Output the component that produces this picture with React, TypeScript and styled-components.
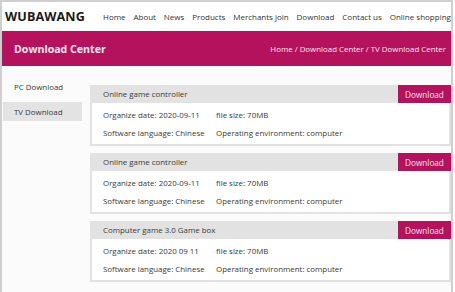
import styled, { createGlobalStyle } from "styled-components";

const GlobalStyle = createGlobalStyle`
    * {
        box-sizing: border-box;
    }
    body {
        margin: 0;
        background: #ffffff;
        font-family: "Open Sans", "Noto Sans", sans-serif;
    }
`;

const Page = styled.div`
    width: 453px;
    height: 292px;
    border: 2px solid #cfcfcf;
    border-bottom: none;
    background-color: #fbfbfb;
    overflow: hidden;
`;

const Header = styled.header`
    height: 29px;
    display: flex;
    align-items: center;
    background-color: #ffffff;
    padding: 0 0 0 3px;
`;

const Logo = styled.h1`
    margin: 0;
    font-size: 12.6px;
    font-weight: 700;
    color: #1a1a1a;
    letter-spacing: 0.1px;
    width: 98px;
`;

const NavList = styled.ul`
    flex: 1;
    margin: 0;
    padding: 0;
    list-style: none;
    display: flex;
    justify-content: space-between;
`;

const NavItem = styled.li`
    font-size: 8px;
    color: #333;
    white-space: nowrap;
    cursor: pointer;
`;

const Banner = styled.section`
    height: 35px;
    background-color: #b5125d;
    display: flex;
    align-items: center;
    justify-content: space-between;
    padding: 0 5px 0 12px;
    color: #fbe6ef;
`;

const BannerTitle = styled.h2`
    margin: 0;
    font-size: 10.6px;
    font-weight: 700;
`;

const Crumbs = styled.div`
    font-size: 7.9px;
`;

const Main = styled.div`
    display: flex;
`;

const Sidebar = styled.aside`
    width: 88px;
    padding: 11px 0 0 1px;
    display: flex;
    flex-direction: column;
`;

const SideItem = styled.div<{ $active?: boolean }>`
    width: 79px;
    height: 19px;
    display: flex;
    align-items: center;
    padding-left: 11px;
    font-size: 7.9px;
    color: #3a3a3a;
    background-color: ${props => (props.$active ? "#e3e3e3" : "transparent")};
    margin-bottom: 6px;
`;

const Content = styled.div`
    flex: 1;
    padding-top: 19px;
    display: flex;
    flex-direction: column;
    gap: 7px;
`;

const Card = styled.div`
    border: 2px solid #e2e2e2;
    border-top: none;
    background-color: #ffffff;
`;

const CardHead = styled.div`
    height: 18px;
    display: flex;
    align-items: center;
    justify-content: space-between;
    background-color: #e2e2e2;
    margin: 0 -2px;
`;

const CardTitle = styled.span`
    font-size: 7.9px;
    color: #3a3a3a;
    padding-left: 13px;
`;

const DownloadBtn = styled.button`
    height: 18px;
    width: 53px;
    border: none;
    background-color: #b5125d;
    color: #fbe6ef;
    font-family: inherit;
    font-size: 8.2px;
    padding: 0;
    cursor: pointer;
`;

const CardBody = styled.div`
    padding: 3px 0 2px 11px;
    display: flex;
    flex-direction: column;
`;

const InfoRow = styled.div`
    height: 18px;
    display: flex;
    align-items: center;
    font-size: 7.9px;
    color: #3a3a3a;
`;

const InfoCell = styled.span<{ $width?: number }>`
    width: ${props => (props.$width ? `${props.$width}px` : "auto")};
    white-space: nowrap;
`;

const items = [
    { title: "Online game controller", date: "2020-09-11" },
    { title: "Online game controller", date: "2020-09-11" },
    { title: "Computer game 3.0  Game box", date: "2020 09 11" },
];

const nav = ["Home", "About", "News", "Products", "Merchants join", "Download", "Contact us", "Online shopping"];

function App() {
    return (
        <>
            <GlobalStyle />
            <Page>
                <Header>
                    <Logo>WUBAWANG</Logo>
                    <NavList>
                        {nav.map(n => (
                            <NavItem key={n}>{n}</NavItem>
                        ))}
                    </NavList>
                </Header>
                <Banner>
                    <BannerTitle>Download Center</BannerTitle>
                    <Crumbs>Home / Download Center / TV Download Center</Crumbs>
                </Banner>
                <Main>
                    <Sidebar>
                        <SideItem>PC Download</SideItem>
                        <SideItem $active>TV Download</SideItem>
                    </Sidebar>
                    <Content>
                        {items.map((it, i) => (
                            <Card key={i}>
                                <CardHead>
                                    <CardTitle>{it.title}</CardTitle>
                                    <DownloadBtn>Download</DownloadBtn>
                                </CardHead>
                                <CardBody>
                                    <InfoRow>
                                        <InfoCell $width={113}>Organize date: {it.date}</InfoCell>
                                        <InfoCell>file size: 70MB</InfoCell>
                                    </InfoRow>
                                    <InfoRow>
                                        <InfoCell $width={113}>Software language: Chinese</InfoCell>
                                        <InfoCell>Operating environment: computer</InfoCell>
                                    </InfoRow>
                                </CardBody>
                            </Card>
                        ))}
                    </Content>
                </Main>
            </Page>
        </>
    );
}

export default App;
